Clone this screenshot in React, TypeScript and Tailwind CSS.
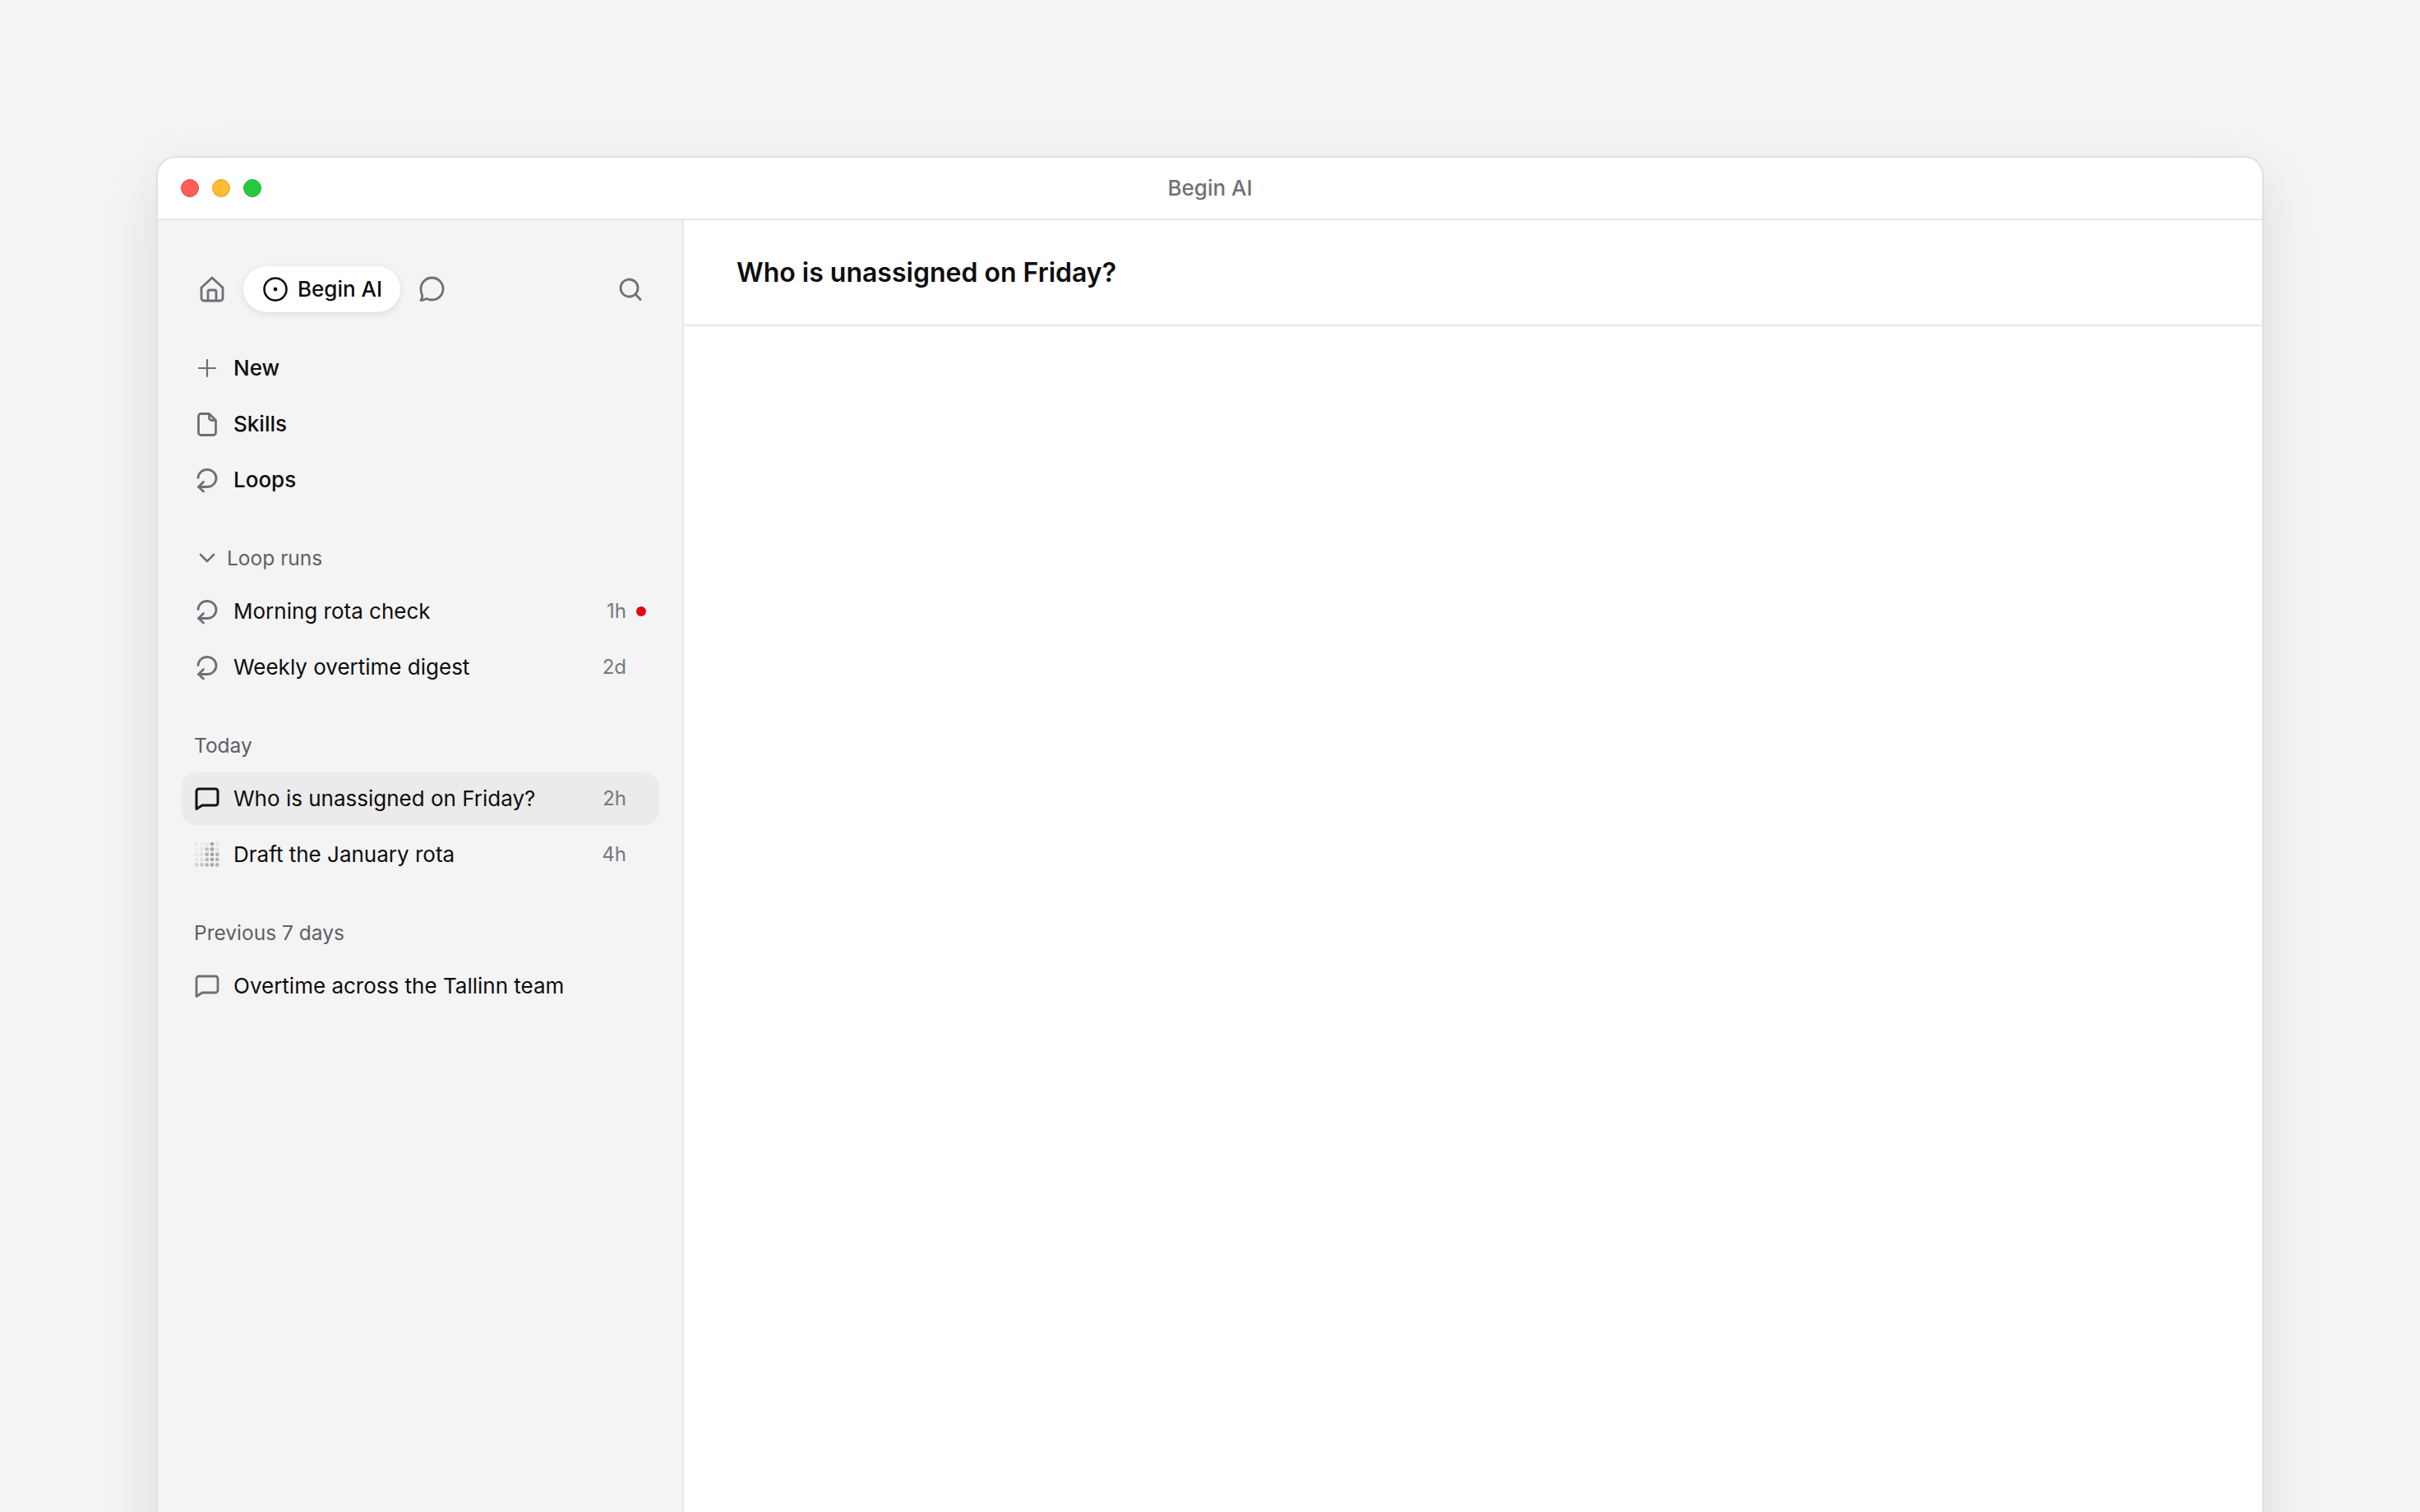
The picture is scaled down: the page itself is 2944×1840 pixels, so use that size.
const font = "font-['Inter',sans-serif]";

const DOTS = [
  [0.08, 0.08, 0.1, 0.6, 0.1],
  [0.06, 0.1, 0.4, 0.6, 0.15],
  [0.1, 0.15, 0.5, 0.6, 0.5],
  [0.1, 0.15, 0.45, 0.6, 0.5],
  [0.25, 0.35, 0.5, 0.6, 0.5],
];

const LoopIcon = () => (
  <svg width="30" height="32" viewBox="0 0 30 32" fill="none" stroke="#6f6f78" strokeWidth="2.8" strokeLinecap="round" strokeLinejoin="round">
    <path d="M4 13.5C4.400 7.600 9.200 3.500 15 3.500c6 0 11 4.800 11 10.500s-5 10.500-11 10.500H4.500" />
    <path d="M10.500 18.500 4.500 24.500l6 5.500" />
  </svg>
);

const ChatSquare = ({ color, width }: { color: string; width: number }) => (
  <svg width="30" height="28" viewBox="0 0 30 28" fill="none" stroke={color} strokeWidth={width} strokeLinejoin="round" strokeLinecap="round">
    <path d="M5 2h20a3 3 0 0 1 3 3v14a3 3 0 0 1-3 3H9l-7 4.500V5a3 3 0 0 1 3-3Z" />
  </svg>
);

const PlusIcon = () => (
  <svg width="22" height="22" viewBox="0 0 22 22" fill="none" stroke="#6f6f78" strokeWidth="2.2" strokeLinecap="round">
    <path d="M11 1v20M1 11h20" />
  </svg>
);

const DocIcon = () => (
  <svg width="24" height="29" viewBox="0 0 24 29" fill="none" stroke="#6f6f78" strokeWidth="2.8" strokeLinejoin="round">
    <path d="M4 1.500h10.500l8 8V24.500a3 3 0 0 1-3 3h-15a3 3 0 0 1-3-3v-20a3 3 0 0 1 3-3Z" />
    <path d="M14.500 1.500v5a3 3 0 0 0 3 3h5" />
  </svg>
);

const DotsIcon = () => (
  <svg width="32" height="32" viewBox="0 0 32 32">
    {DOTS.map((row, y) =>
      row.map((o, x) => (
        <rect key={`${x}-${y}`} x={x * 6.7} y={y * 6.7} width="4.6" height="4.6" rx="1.4" fill="#6f6f78" opacity={o} />
      ))
    )}
  </svg>
);

const Row = ({ icon, label, time, dot, active, strong }: { icon: React.ReactNode; label: string; time?: string; dot?: boolean; active?: boolean; strong?: boolean }) => (
  <div className={`flex h-[64px] items-center rounded-[18px] px-[16px] ${active ? "bg-[#ebebeb]" : ""}`}>
    <span className="flex w-[30px] shrink-0 items-center justify-center">{icon}</span>
    <span className={`ml-[17px] flex-1 text-[26px] leading-[36px] text-[#0d0d0d] ${strong ? "font-medium" : ""}`}>{label}</span>
    {time && <span className="text-[24px] leading-[36px] text-[#77777f]">{time}</span>}
    {time && (
      <span className="flex w-[24px] pl-[12px]">
        {dot && <span className="h-[12px] w-[12px] shrink-0 rounded-full bg-[#e30613]" />}
      </span>
    )}
  </div>
);

const SectionLabel = ({ children }: { children: React.ReactNode }) => (
  <div className="flex h-[36px] items-center pl-[15px] text-[24.5px] text-[#5f5f66]">{children}</div>
);

export default function App() {
  return (
    <div className={`h-screen w-screen overflow-hidden bg-[#f4f4f4] pl-[190px] pt-[190px] ${font}`}>
      <div className="flex h-[1700px] w-[2564px] flex-col overflow-hidden rounded-t-[24px] border-2 border-[#e0e0e0] bg-white shadow-[0_24px_70px_rgba(0,0,0,0.1)]">
        {/* title bar */}
        <div className="relative flex h-[76px] shrink-0 items-center justify-center border-b-2 border-[#e8e8e8] bg-white pb-[1px]">
          <div className="absolute left-[28px] flex gap-[16px]">
            <span className="h-[22px] w-[22px] rounded-full border border-[#e2463f] bg-[#ff5f57]" />
            <span className="h-[22px] w-[22px] rounded-full border border-[#e1a12a] bg-[#febc2e]" />
            <span className="h-[22px] w-[22px] rounded-full border border-[#25b13a] bg-[#28c840]" />
          </div>
          <span className="text-[26px] font-medium text-[#6f6f76]">Begin AI</span>
        </div>

        <div className="flex flex-1">
          {/* sidebar */}
          <div className="w-[640px] shrink-0 border-r-2 border-[#e8e8e8] bg-[#f4f4f4] pl-[29px] pr-[28px] pt-[56px]">
            <div className="flex h-[56px] items-center">
              <svg className="ml-[22px]" width="30" height="32" viewBox="0 0 30 32" fill="none" stroke="#6f6f78" strokeWidth="2.8" strokeLinejoin="round">
                <path d="M2 14 15 2l13 12v13a3 3 0 0 1-3 3H5a3 3 0 0 1-3-3V14Z" />
                <path d="M10 30V19a2 2 0 0 1 2-2h6a2 2 0 0 1 2 2v11" />
              </svg>
              <div className="ml-[23px] flex h-[56px] w-[191px] items-center rounded-full bg-white pl-[24px] shadow-[0_2px_8px_rgba(0,0,0,0.1)]">
                <svg width="30" height="30" viewBox="0 0 30 30" fill="none" stroke="#111111" strokeWidth="2.6">
                  <circle cx="15" cy="15" r="13.5" />
                  <circle cx="15" cy="15" r="2.4" fill="#111111" stroke="none" />
                </svg>
                <span className="mb-[1px] ml-[12px] text-[26px] font-medium text-[#0d0d0d]">Begin AI</span>
              </div>
              <svg className="ml-[22px]" width="32" height="32" viewBox="0 0 32 32" fill="none" stroke="#6f6f78" strokeWidth="2.8" strokeLinejoin="round">
                <path d="M16.5 2C24 2 30 8 30 15.500S24 29 16.500 29c-2.500 0-4.500-.6-6.500-1.600-1.800 1-4 2.100-7 2.100 1.500-1.800 2-3.600 1.700-6C3.600 21.500 3 18.500 3 15.500 3 8 9 2 16.500 2Z" />
              </svg>
              <svg className="ml-auto mr-[21px]" width="28" height="28" viewBox="0 0 28 28" fill="none" stroke="#6f6f78" strokeWidth="2.8" strokeLinecap="round">
                <circle cx="12.500" cy="12.500" r="10.500" />
                <path d="M20.500 20.500l5.500 6" />
              </svg>
            </div>

            <div className="mt-[36px] flex flex-col gap-[4px]">
              <Row icon={<PlusIcon />} label="New" strong />
              <Row icon={<DocIcon />} label="Skills" strong />
              <Row icon={<LoopIcon />} label="Loops" strong />
            </div>

            <div className="mt-[45px]">
              <div className="flex h-[36px] items-center pl-[16px] text-[24.5px] text-[#5f5f66]">
                <span className="flex w-[30px] justify-center">
                  <svg width="20" height="12" viewBox="0 0 20 12" fill="none" stroke="#6f6f78" strokeWidth="2.6" strokeLinecap="round" strokeLinejoin="round">
                    <path d="M2 2l8 8 8-8" />
                  </svg>
                </span>
                <span className="ml-[9px]">Loop runs</span>
              </div>
              <div className="mt-[15px] flex flex-col gap-[4px]">
                <Row icon={<LoopIcon />} label="Morning rota check" time="1h" dot />
                <Row icon={<LoopIcon />} label="Weekly overtime digest" time="2d" />
              </div>
            </div>

            <div className="mt-[45px]">
              <SectionLabel>Today</SectionLabel>
              <div className="mt-[15px] flex flex-col gap-[4px]">
                <Row icon={<ChatSquare color="#111111" width={3} />} label="Who is unassigned on Friday?" time="2h" active />
                <Row icon={<DotsIcon />} label="Draft the January rota" time="4h" />
              </div>
            </div>

            <div className="mt-[45px]">
              <SectionLabel>Previous 7 days</SectionLabel>
              <div className="mt-[15px] flex flex-col gap-[4px]">
                <Row icon={<ChatSquare color="#6f6f78" width={2.8} />} label="Overtime across the Tallinn team" />
              </div>
            </div>
          </div>

          {/* main */}
          <div className="flex-1">
            <div className="flex h-[129px] items-center border-b-2 border-[#e8e8e8] pl-[64px] pt-[1px]">
              <h1 className="text-[32px] font-semibold text-[#0d0d0d]">Who is unassigned on Friday?</h1>
            </div>
          </div>
        </div>
      </div>
    </div>
  );
}
